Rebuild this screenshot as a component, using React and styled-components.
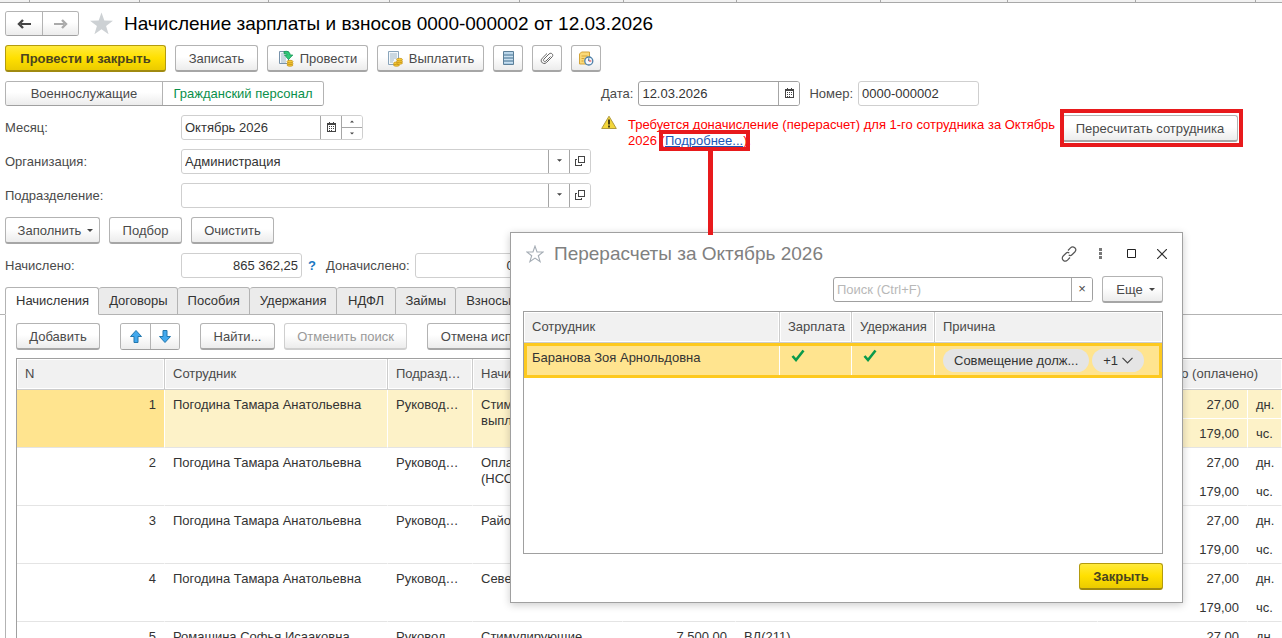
import React from 'react'
import styled, { createGlobalStyle, css } from 'styled-components'

const accruals = [
    { n: 1, employee: 'Погодина Тамара Анатольевна', department: 'Руководство', kind: 'Стимулирующие выплаты', sum: '42 000,00', code: 'ВД(211)', selected: true },
    { n: 2, employee: 'Погодина Тамара Анатольевна', department: 'Руководство', kind: 'Оплата по окладу (НСОТ)', sum: '18 500,00', code: 'ВД(211)' },
    { n: 3, employee: 'Погодина Тамара Анатольевна', department: 'Руководство', kind: 'Районный коэф.', sum: '9 075,00', code: 'ВД(211)' },
    { n: 4, employee: 'Погодина Тамара Анатольевна', department: 'Руководство', kind: 'Северная надбавка', sum: '9 075,00', code: 'ВД(211)' },
    { n: 5, employee: 'Ромашина Софья Исааковна', department: 'Руководство', kind: 'Стимулирующие выплаты', sum: '7 500,00', code: 'ВД(211)' },
]

const tabs = ['Начисления', 'Договоры', 'Пособия', 'Удержания', 'НДФЛ', 'Займы', 'Взносы']

function CalendarIcon() {
    return (
        <svg width="9" height="10" viewBox="0 0 9 10" shapeRendering="crispEdges">
            <path d="M2 0h1v2H2zM6 0h1v2H6zM0 1h9v2H0z" fill="#444" />
            <path d="M.5 1.5h8v8h-8z" fill="none" stroke="#444" />
            <path d="M2 4h1v1H2zM4 4h1v1H4zM6 4h1v1H6zM2 6h1v1H2zM4 6h1v1H4zM6 6h1v1H6zM2 8h1v1H2zM4 8h1v1H4z" fill="#444" />
        </svg>
    )
}

function OpenIcon() {
    return (
        <svg width="10" height="10" viewBox="0 0 10 10" shapeRendering="crispEdges" fill="none" stroke="#444">
            <path d="M3.5 .5h6v6h-6z" />
            <path d="M2 3.500H.5v6h6V8" />
        </svg>
    )
}

function Caret({ up, size = 5 }) {
    return (
        <svg width={size} height="3" viewBox="0 0 6 3">
            <path d={up ? 'M0 3h6L3 0z' : 'M0 0h6L3 3z'} fill="#444" />
        </svg>
    )
}

function Arrow({ flip, color }) {
    return (
        <svg width="14" height="10" viewBox="0 0 14 10">
            <path d={flip ? 'M0 5h10' : 'M14 5H4'} fill="none" stroke={color} strokeWidth="2" />
            <path d={flip ? 'M8 1l4 4-4 4' : 'M6 1L2 5l4 4'} fill="none" stroke={color} strokeWidth="2.400" />
        </svg>
    )
}

function MoveArrow({ down }) {
    return (
        <svg width="12" height="13" viewBox="0 0 12 13">
            <path
                d={down ? 'M4 .5h4v6h3.500L6 12.500.5 6.500H4z' : 'M4 12.500h4v-6h3.500L6 .5.5 6.500H4z'}
                fill="#42a9ee"
                stroke="#2277ad"
            />
        </svg>
    )
}

function PostIcon() {
    return (
        <svg width="16" height="17" viewBox="0 0 16 17">
            <path d="M1.500 1.500h9v12h-9z" fill="#f4f8fb" stroke="#7893ab" />
            <path d="M3 4h5M3 6h4M3 8h5M3 10h5M3 12h5" stroke="#8ba4b9" strokeWidth=".8" />
            <g fill="#f5c935" stroke="#c28e14" strokeWidth=".7">
                <ellipse cx="12" cy="15" rx="3" ry="1.300" />
                <ellipse cx="12" cy="13.300" rx="3" ry="1.300" />
                <ellipse cx="12" cy="11.600" rx="3" ry="1.300" />
            </g>
            <path d="M6 1.500c4-.8 6 .7 6.200 3.500h2.600L10.500 9.500 6.500 5h2.600C9 4 8 3.300 6 3.500z" fill="#2fc979" stroke="#159653" strokeWidth=".8" />
        </svg>
    )
}

function PayIcon() {
    return (
        <svg width="16" height="17" viewBox="0 0 16 17">
            <path d="M1.500 1.500h10v13h-10z" fill="#f4f8fb" stroke="#8aa5bb" />
            <path d="M3 4h7M3 6h7M3 8h7M3 10h4M3 12h3" stroke="#8ba4b9" strokeWidth=".8" />
            <g fill="#f5c935" stroke="#c28e14" strokeWidth=".7">
                <ellipse cx="9.500" cy="15" rx="3" ry="1.300" />
                <ellipse cx="9.500" cy="13.300" rx="3" ry="1.300" />
                <ellipse cx="12.500" cy="13" rx="3" ry="1.300" />
                <ellipse cx="12.500" cy="11.300" rx="3" ry="1.300" />
                <ellipse cx="12.500" cy="9.600" rx="3" ry="1.300" />
            </g>
        </svg>
    )
}

function RegisterIcon() {
    return (
        <svg width="11" height="14" viewBox="0 0 11 14">
            <path d="M.5.500h10v13H.5z" fill="#a9cbe4" stroke="#5d8099" />
            <path d="M0 4h11M0 7h11M0 10h11" stroke="#5d8099" />
            <path d="M1 2h9M1 5.500h9M1 8.500h9M1 11.500h9" stroke="#c9e0f0" />
        </svg>
    )
}

function ClipIcon() {
    return (
        <svg width="14" height="14" viewBox="0 0 14 14" fill="none" stroke="#666">
            <path d="M10.500 5.500L6 10c-1.500 1.500-3.500-.4-2-2l5-5c2.200-2.200 5.200.9 3 3l-5.500 5.500c-3 3-7.300-1.200-4.300-4.200L7 2.500" />
        </svg>
    )
}

function HistoryIcon() {
    return (
        <svg width="16" height="15" viewBox="0 0 16 15">
            <path d="M1.500 3l2-2h8v12h-10z" fill="#fbd977" stroke="#d3a43a" />
            <path d="M3.500 5h6M3.500 7.500h3M3.500 10h2" stroke="#d3a43a" />
            <circle cx="10.800" cy="10" r="4" fill="#f4f9ff" stroke="#4d7fa8" strokeWidth="1.300" />
            <path d="M10.800 7.300V10" stroke="#245d8b" />
            <path d="M10.800 10h2.500" stroke="#d33" />
        </svg>
    )
}

function WarningIcon() {
    return (
        <svg width="16" height="15" viewBox="0 0 16 15">
            <path d="M8 1.200L15.300 13.500H.7z" fill="#f3d63a" stroke="#b09a3c" strokeLinejoin="round" />
            <path d="M7 4.500h2v5H7zM7 10.500h2v2H7z" fill="#4a4012" />
        </svg>
    )
}

function Star({ outline, size }) {
    return (
        <svg width={size} height={size} viewBox="0 0 24 24">
            <path
                d="M12 1.500l2.700 7.700 8.300.1-6.600 5 2.400 7.900L12 17.500l-6.800 4.700 2.400-7.900-6.600-5 8.300-.1z"
                fill={outline ? 'none' : '#cdd1d4'}
                stroke={outline ? '#a5adb5' : 'none'}
                strokeWidth="1.500"
            />
        </svg>
    )
}

function LinkIcon() {
    return (
        <svg width="16" height="16" viewBox="0 0 16 16" fill="none" stroke="#555" strokeWidth="1.200">
            <path d="M7 4.500l2.500-2.700c1.300-1.300 3-1.200 4.300 0s1.200 2.900 0 4.200L11 8.700c-1 1-2.300 1-3.300.3" />
            <path d="M9 11.500l-2.500 2.700c-1.300 1.300-3 1.200-4.300 0s-1.200-2.900 0-4.200L5 7.300c1-1 2.300-1 3.300-.3" />
        </svg>
    )
}

function Check() {
    return (
        <svg width="14" height="13" viewBox="0 0 14 13">
            <path d="M1.500 7l3.500 4L12.500 1.500" fill="none" stroke="#0a9a4b" strokeWidth="2.600" />
        </svg>
    )
}

function PickerField({ id, label, value }) {
    return (
        <FormRow>
            <Label htmlFor={id}>{label}</Label>
            <Field $grow>
                <Input id={id} defaultValue={value} />
                <FieldButton aria-label="Выбрать"><Caret /></FieldButton>
                <FieldButton aria-label="Открыть"><OpenIcon /></FieldButton>
            </Field>
        </FormRow>
    )
}

function AccrualRow({ row }) {
    return (
        <>
            <BodyRow $selected={row.selected}>
                <Cell rowSpan={2} $right $current={row.selected}>{row.n}</Cell>
                <Cell rowSpan={2}>{row.employee}</Cell>
                <Cell rowSpan={2} $clip>{row.department}</Cell>
                <Cell rowSpan={2}>{row.kind}</Cell>
                <Cell rowSpan={2} $right>{row.sum}</Cell>
                <Cell rowSpan={2}>{row.code}</Cell>
                <Cell $right $half>27,00</Cell>
                <Cell $half>дн.</Cell>
            </BodyRow>
            <BodyRow $selected={row.selected}>
                <Cell $right>179,00</Cell>
                <Cell>чс.</Cell>
            </BodyRow>
        </>
    )
}

function RecalcDialog() {
    return (
        <Dialog role="dialog" aria-labelledby="dialog-title">
            <DialogHead>
                <Star outline size={18} />
                <DialogTitle id="dialog-title">Перерасчеты за Октябрь 2026</DialogTitle>
                <WindowButtons>
                    <WindowButton aria-label="Получить ссылку"><LinkIcon /></WindowButton>
                    <WindowButton aria-label="Дополнительно">
                        <svg width="3" height="11" viewBox="0 0 3 11"><path d="M0 0h3v3H0zM0 4h3v3H0zM0 8h3v3H0z" fill="#777" /></svg>
                    </WindowButton>
                    <WindowButton aria-label="Развернуть">
                        <svg width="9" height="9" viewBox="0 0 9 9"><path d="M.5.500h8v8h-8z" fill="none" stroke="#222" /></svg>
                    </WindowButton>
                    <WindowButton aria-label="Закрыть окно">
                        <svg width="10" height="10" viewBox="0 0 10 10"><path d="M0 0l10 10M10 0L0 10" stroke="#333" strokeWidth="1.200" /></svg>
                    </WindowButton>
                </WindowButtons>
            </DialogHead>
            <SearchRow>
                <SearchField $dark>
                    <Input aria-label="Поиск" placeholder="Поиск (Ctrl+F)" />
                    <FieldButton aria-label="Очистить поиск">×</FieldButton>
                </SearchField>
                <MenuButton $width={61}>Еще<Caret size={6} /></MenuButton>
            </SearchRow>
            <DialogList>
                <Table>
                    <colgroup>
                        <Col $width={256} />
                        <Col $width={72} />
                        <Col $width={83} />
                        <Col />
                    </colgroup>
                    <thead>
                        <tr>
                            <Head>Сотрудник</Head>
                            <Head $snug>Зарплата</Head>
                            <Head $snug>Удержания</Head>
                            <Head>Причина</Head>
                        </tr>
                    </thead>
                    <tbody>
                        <ActiveRow>
                            <Cell>Баранова Зоя Арнольдовна</Cell>
                            <CheckCell><Check /></CheckCell>
                            <CheckCell><Check /></CheckCell>
                            <ChipCell>
                                <Chips>
                                    <Chip>Совмещение долж...</Chip>
                                    <ChipButton>
                                        +1
                                        <svg width="11" height="7" viewBox="0 0 11 7"><path d="M.5.800l5 5 5-5" fill="none" stroke="#444" strokeWidth="1.200" /></svg>
                                    </ChipButton>
                                </Chips>
                            </ChipCell>
                        </ActiveRow>
                    </tbody>
                </Table>
            </DialogList>
            <DialogFoot>
                <PrimaryButton $width={84}>Закрыть</PrimaryButton>
            </DialogFoot>
        </Dialog>
    )
}

function App() {
    return (
        <Page>
            <GlobalStyle />
            <WindowStrip>
                {[30, 110, 129, 121, 130, 104, 113, 144, 127, 128, 120].map((width, i) => (
                    <StripTab key={i} $width={width} />
                ))}
            </WindowStrip>
            <Content>
                <TitleRow>
                    <ButtonPair $slim>
                        <PairButton $width={36} aria-label="Назад"><Arrow color="#444" /></PairButton>
                        <PairButton $width={36} aria-label="Вперед"><Arrow flip color="#aaa" /></PairButton>
                    </ButtonPair>
                    <Star size={25} />
                    <Title>Начисление зарплаты и взносов 0000-000002 от 12.03.2026</Title>
                </TitleRow>
                <Toolbar>
                    <PrimaryButton $width={161}>Провести и закрыть</PrimaryButton>
                    <Button $width={83}>Записать</Button>
                    <Button $width={101}><PostIcon />Провести</Button>
                    <Button $width={107}><PayIcon />Выплатить</Button>
                    <IconButton aria-label="Реестр"><RegisterIcon /></IconButton>
                    <IconButton aria-label="Присоединенные файлы"><ClipIcon /></IconButton>
                    <IconButton aria-label="История"><HistoryIcon /></IconButton>
                </Toolbar>
                <Columns>
                    <LeftColumn>
                        <ButtonPair $slim>
                            <PairButton $width={156}>Военнослужащие</PairButton>
                            <PairButton $width={161} $active>Гражданский персонал</PairButton>
                        </ButtonPair>
                        <FormRow>
                            <Label htmlFor="month">Месяц:</Label>
                            <Field $width={182}>
                                <Input id="month" defaultValue="Октябрь 2026" />
                                <FieldButton aria-label="Календарь"><CalendarIcon /></FieldButton>
                                <Spinner>
                                    <SpinButton aria-label="Следующий месяц"><Caret up size={4} /></SpinButton>
                                    <SpinButton aria-label="Предыдущий месяц"><Caret size={4} /></SpinButton>
                                </Spinner>
                            </Field>
                        </FormRow>
                        <PickerField id="organization" label="Организация:" value="Администрация" />
                        <PickerField id="department" label="Подразделение:" value="" />
                    </LeftColumn>
                    <RightColumn>
                        <InlineFields>
                            <InlineLabel htmlFor="date">Дата:</InlineLabel>
                            <Field $width={162} $dark>
                                <Input id="date" defaultValue="12.03.2026" />
                                <FieldButton aria-label="Календарь"><CalendarIcon /></FieldButton>
                            </Field>
                            <NumberLabel htmlFor="number">Номер:</NumberLabel>
                            <Field $width={121}>
                                <Input id="number" defaultValue="0000-000002" />
                            </Field>
                        </InlineFields>
                        <Notice>
                            <WarningIcon />
                            <NoticeText>
                                Требуется доначисление (перерасчет) для 1-го сотрудника за Октябрь 2026{' '}
                                <Marked>(<DetailsLink href="#details">Подробнее...</DetailsLink>)<Connector /></Marked>.
                            </NoticeText>
                            <MarkedButton>
                                <Button $width={176}>Пересчитать сотрудника</Button>
                            </MarkedButton>
                        </Notice>
                    </RightColumn>
                </Columns>
                <Toolbar>
                    <MenuButton $width={95}>Заполнить<Caret size={6} /></MenuButton>
                    <Button $width={73}>Подбор</Button>
                    <Button $width={83}>Очистить</Button>
                </Toolbar>
                <FormRow>
                    <Label htmlFor="accrued">Начислено:</Label>
                    <Field $width={121}>
                        <Input id="accrued" $right defaultValue="865 362,25" />
                    </Field>
                    <Help aria-label="Справка">?</Help>
                    <InlineLabel htmlFor="extra">Доначислено:</InlineLabel>
                    <Field $width={121}>
                        <Input id="extra" $right defaultValue="0,00" />
                    </Field>
                </FormRow>
            </Content>
            <TabBar role="tablist">
                {tabs.map((tab, i) => (
                    <Tab key={tab} role="tab" aria-selected={i === 0} $active={i === 0}>{tab}</Tab>
                ))}
            </TabBar>
            <Panel role="tabpanel">
                <PanelToolbar>
                    <Button $width={84}>Добавить</Button>
                    <ButtonPair>
                        <PairButton $width={29} aria-label="Вверх"><MoveArrow /></PairButton>
                        <PairButton $width={29} aria-label="Вниз"><MoveArrow down /></PairButton>
                    </ButtonPair>
                    <Group>
                        <Button $width={75}>Найти...</Button>
                        <Button $width={123} disabled>Отменить поиск</Button>
                    </Group>
                    <Button $width={156}>Отмена исправления</Button>
                </PanelToolbar>
                <List>
                    <Table>
                        <colgroup>
                            <Col $width={148} />
                            <Col $width={223} />
                            <Col $width={85} />
                            <Col $width={150} />
                            <Col $width={113} />
                            <Col />
                            <Col $width={150} />
                            <Col $width={34} />
                        </colgroup>
                        <thead>
                            <tr>
                                <Head>N</Head>
                                <Head>Сотрудник</Head>
                                <Head>Подразделение</Head>
                                <Head>Начисление</Head>
                                <Head>Результат</Head>
                                <Head>Вид дохода</Head>
                                <Head colSpan={2} $right>Отработано (оплачено)</Head>
                            </tr>
                        </thead>
                        <tbody>
                            {accruals.map((row) => <AccrualRow key={row.n} row={row} />)}
                        </tbody>
                    </Table>
                </List>
            </Panel>
            <RecalcDialog />
        </Page>
    )
}

const GlobalStyle = createGlobalStyle`
    * {
        box-sizing: border-box;
    }
    body {
        margin: 0;
        background: #fff;
    }
    body, button, input {
        font-family: Arial, "Liberation Sans", sans-serif;
        font-size: 13px;
        line-height: 16px;
        color: #4a4a4a;
    }
    svg {
        flex-shrink: 0;
    }
`

const Page = styled.div`
    position: relative;
    display: flex;
    flex-direction: column;
    height: 100vh;
    overflow: hidden;
`

const WindowStrip = styled.div`
    display: flex;
    flex-shrink: 0;
    height: 3px;
    border-bottom: 1px solid #a8a8a8;
    background: #f2f2f2;
`

const StripTab = styled.div`
    width: ${(p) => p.$width}px;
    border-right: 1px solid #a8a8a8;
`

const Content = styled.div`
    display: flex;
    flex-direction: column;
    flex-shrink: 0;
    gap: 9px;
    padding: 8px 5px 9px;
`

const TitleRow = styled.div`
    display: flex;
    align-items: center;
    gap: 10px;
    height: 25px;
`

const Title = styled.h1`
    margin: 0;
    font-size: 19px;
    font-weight: 400;
    line-height: 24px;
    color: #000;
`

const Toolbar = styled.div`
    display: flex;
    gap: 9px;
`

const Group = styled.div`
    display: flex;
    gap: 9px;
`

const Button = styled.button`
    display: flex;
    align-items: center;
    justify-content: center;
    gap: 6px;
    flex-shrink: 0;
    height: 27px;
    min-width: ${(p) => p.$width || 0}px;
    padding: 1px 4px 0;
    border: 1px solid #b3b3b3;
    border-bottom: 2px solid #a6a6a6;
    border-radius: 3px;
    background: linear-gradient(#fff 45%, #ececec);
    white-space: nowrap;
    &:disabled {
        border-color: #cfcfcf;
        color: #999;
    }
`

const MenuButton = styled(Button)`
    padding-left: 10px;
`

const PrimaryButton = styled(Button)`
    border-color: #b39b0e;
    border-bottom-color: #a08a10;
    background: linear-gradient(#ffea3c, #ffe000 50%, #ebcb00);
    font-weight: 700;
    color: #4a4420;
`

const IconButton = styled(Button)`
    width: 30px;
    padding: 0;
`

const ButtonPair = styled.div`
    display: flex;
    align-self: flex-start;
    height: ${(p) => (p.$slim ? 25 : 27)}px;
    border: 1px solid #b3b3b3;
    border-bottom-color: #a0a0a0;
    border-radius: 3px;
    overflow: hidden;
`

const PairButton = styled.button`
    display: flex;
    align-items: center;
    justify-content: center;
    min-width: ${(p) => p.$width}px;
    padding: 0;
    border: 0;
    background: linear-gradient(#fff 45%, #ececec);
    & + & {
        border-left: 1px solid #b3b3b3;
    }
    ${(p) => p.$active && css`
        background: #fff;
        color: #0a8f4a;
    `}
`

const Columns = styled.div`
    display: flex;
    gap: 10px;
`

const LeftColumn = styled.div`
    display: flex;
    flex-direction: column;
    gap: 9px;
    flex: 0 0 586px;
`

const RightColumn = styled.div`
    display: flex;
    flex-direction: column;
    gap: 9px;
    flex: 1;
`

const FormRow = styled.div`
    display: flex;
    align-items: center;
    height: 25px;
`

const Label = styled.label`
    flex: 0 0 176px;
`

const InlineLabel = styled.label`
    padding-right: 5px;
`

const InlineFields = styled.div`
    display: flex;
    align-items: center;
    height: 25px;
`

const NumberLabel = styled(InlineLabel)`
    padding-left: 9px;
`

const Field = styled.div`
    display: flex;
    height: 25px;
    width: ${(p) => (p.$width ? p.$width + 'px' : 'auto')};
    flex: ${(p) => (p.$grow ? '1' : 'none')};
    border: 1px solid ${(p) => (p.$dark ? '#a0a0a0' : '#cfcfcf')};
    border-radius: 3px;
    overflow: hidden;
    background: #fff;
`

const SearchField = styled(Field)`
    flex: 0 0 260px;
`

const Input = styled.input`
    flex: 1;
    width: 0;
    min-width: 0;
    padding: 0 3px;
    border: 0;
    outline: none;
    background: none;
    color: #333;
    text-align: ${(p) => (p.$right ? 'right' : 'left')};
    &::placeholder {
        color: #b8b8b8;
    }
`

const FieldButton = styled.button`
    display: flex;
    align-items: center;
    justify-content: center;
    width: 21px;
    padding: 0 0 2px;
    border: 0;
    border-left: 1px solid #a6a6a6;
    background: #fff;
`

const Spinner = styled.div`
    display: flex;
    flex-direction: column;
    width: 21px;
    border-left: 1px solid #a6a6a6;
`

const SpinButton = styled.button`
    display: flex;
    flex: 1;
    align-items: center;
    justify-content: center;
    padding: 0;
    border: 0;
    background: #fff;
    & + & {
        border-top: 1px solid #a6a6a6;
    }
`

const Help = styled.button`
    width: 24px;
    padding: 0 4px 0 0;
    border: 0;
    background: none;
    font-weight: 700;
    color: #1a78c2;
`

const Notice = styled.div`
    display: flex;
    align-items: flex-start;
    gap: 11px;
`

const NoticeText = styled.p`
    flex: 0 1 432px;
    margin: 2px 0 0;
    color: #f00;
`

const Marked = styled.span`
    position: relative;
    white-space: nowrap;
    &::before {
        content: '';
        position: absolute;
        inset: -3px -2px;
        border: 4px solid #e81a1c;
    }
`

const DetailsLink = styled.a`
    color: #1a56b8;
`

const Connector = styled.span`
    position: absolute;
    top: 18px;
    left: 47px;
    z-index: 2;
    width: 5px;
    height: 84px;
    background: #e81a1c;
`

const MarkedButton = styled.div`
    position: relative;
    margin-left: -9px;
    &::before {
        content: '';
        position: absolute;
        inset: -6px -5px -5px -2px;
        border: 4px solid #e81a1c;
        pointer-events: none;
    }
`

const TabBar = styled.div`
    display: flex;
    flex-shrink: 0;
    height: 28px;
    padding-left: 5px;
    box-shadow: inset 0 -1px #b3b3b3;
`

const Tab = styled.button`
    min-width: 59px;
    padding: 0 9px 1px 10px;
    border: 1px solid #b3b3b3;
    border-left-width: ${(p) => (p.$active ? '1px' : '0')};
    border-bottom-color: ${(p) => (p.$active ? '#fff' : '#b3b3b3')};
    border-radius: 3px 3px 0 0;
    background: ${(p) => (p.$active ? '#fff' : '#ebebeb')};
    color: #333;
`

const Panel = styled.div`
    display: flex;
    flex-direction: column;
    flex: 1;
    gap: 8px;
    min-height: 0;
    margin-left: 5px;
    padding: 8px 0 0 10px;
    border-left: 1px solid #b3b3b3;
`

const PanelToolbar = styled.div`
    display: flex;
    flex-shrink: 0;
    gap: 20px;
`

const List = styled.div`
    flex: 1;
    min-height: 0;
    overflow: hidden;
    border: 1px solid #a0a0a0;
    border-width: 1px 0 0 1px;
`

const Table = styled.table`
    width: 100%;
    table-layout: fixed;
    border-collapse: separate;
    border-spacing: 0;
`

const Col = styled.col`
    width: ${(p) => (p.$width ? p.$width + 'px' : 'auto')};
`

const Head = styled.th`
    height: 31px;
    padding: 0 ${(p) => (p.$right ? 24 : p.$snug ? 2 : 8)}px 0 8px;
    border-right: 1px solid #ccc;
    border-bottom: 1px solid #ccc;
    box-shadow: inset 0 0 0 1px #fff;
    background: #f1f1f1;
    font-weight: 400;
    text-align: ${(p) => (p.$right ? 'right' : 'left')};
    white-space: nowrap;
    overflow: hidden;
    text-overflow: ellipsis;
    &:last-child {
        border-right: 0;
    }
`

const Cell = styled.td`
    height: 29px;
    padding: 7px 8px 5px;
    border-right: 1px solid #fff;
    border-bottom: 1px solid ${(p) => (p.$half ? '#fff' : '#e4e4e4')};
    vertical-align: top;
    color: #333;
    text-align: ${(p) => (p.$right ? 'right' : 'left')};
    ${(p) => p.$clip && css`
        overflow: hidden;
        text-overflow: ellipsis;
        white-space: nowrap;
    `}
    ${(p) => p.$current && css`
        &&& {
            background: #ffe48f;
        }
    `}
`

const BodyRow = styled.tr`
    ${Cell} {
        background: ${(p) => (p.$selected ? '#fdf2c8' : '#fff')};
    }
`

const ActiveRow = styled.tr`
    outline: 3px solid #fdc91f;
    outline-offset: -3px;
    ${Cell} {
        height: 35px;
        background: #ffe48f;
    }
    ${Cell}:last-child {
        border-right: 0;
    }
`

const CheckCell = styled(Cell)`
    padding: 6px 11px 5px;
`

const ChipCell = styled(Cell)`
    padding: 6px 8px 5px;
`

const Chips = styled.div`
    display: flex;
    gap: 3px;
`

const Chip = styled.span`
    display: flex;
    align-items: center;
    gap: 4px;
    height: 23px;
    padding: 0 11px;
    border: 0;
    border-radius: 12px;
    background: #e5e5e5;
    color: #333;
    white-space: nowrap;
`

const ChipButton = styled(Chip).attrs({ as: 'button' })``

const Dialog = styled.section`
    position: absolute;
    top: 232px;
    left: 510px;
    z-index: 1;
    display: flex;
    flex-direction: column;
    width: 673px;
    height: 371px;
    padding: 8px 19px 12px 12px;
    border: 1px solid #a0a0a0;
    background: #fff;
    box-shadow: 0 2px 8px rgba(0, 0, 0, 0.2);
`

const DialogHead = styled.div`
    display: flex;
    align-items: center;
    gap: 10px;
    height: 25px;
    padding-left: 3px;
`

const DialogTitle = styled.h2`
    flex: 1;
    margin: 0;
    font-size: 19px;
    font-weight: 400;
    line-height: 24px;
    color: #808080;
`

const WindowButtons = styled.div`
    display: flex;
    align-items: center;
    gap: 7px;
    margin-right: -11px;
`

const WindowButton = styled.button`
    display: flex;
    align-items: center;
    justify-content: center;
    width: 24px;
    height: 24px;
    padding: 0;
    border: 0;
    background: none;
`

const SearchRow = styled.div`
    display: flex;
    align-items: center;
    justify-content: flex-end;
    gap: 9px;
    padding: 10px 0 8px;
`

const DialogList = styled.div`
    flex: 1;
    border: 1px solid #a0a0a0;
`

const DialogFoot = styled.div`
    display: flex;
    justify-content: flex-end;
    padding-top: 9px;
`

export default App
